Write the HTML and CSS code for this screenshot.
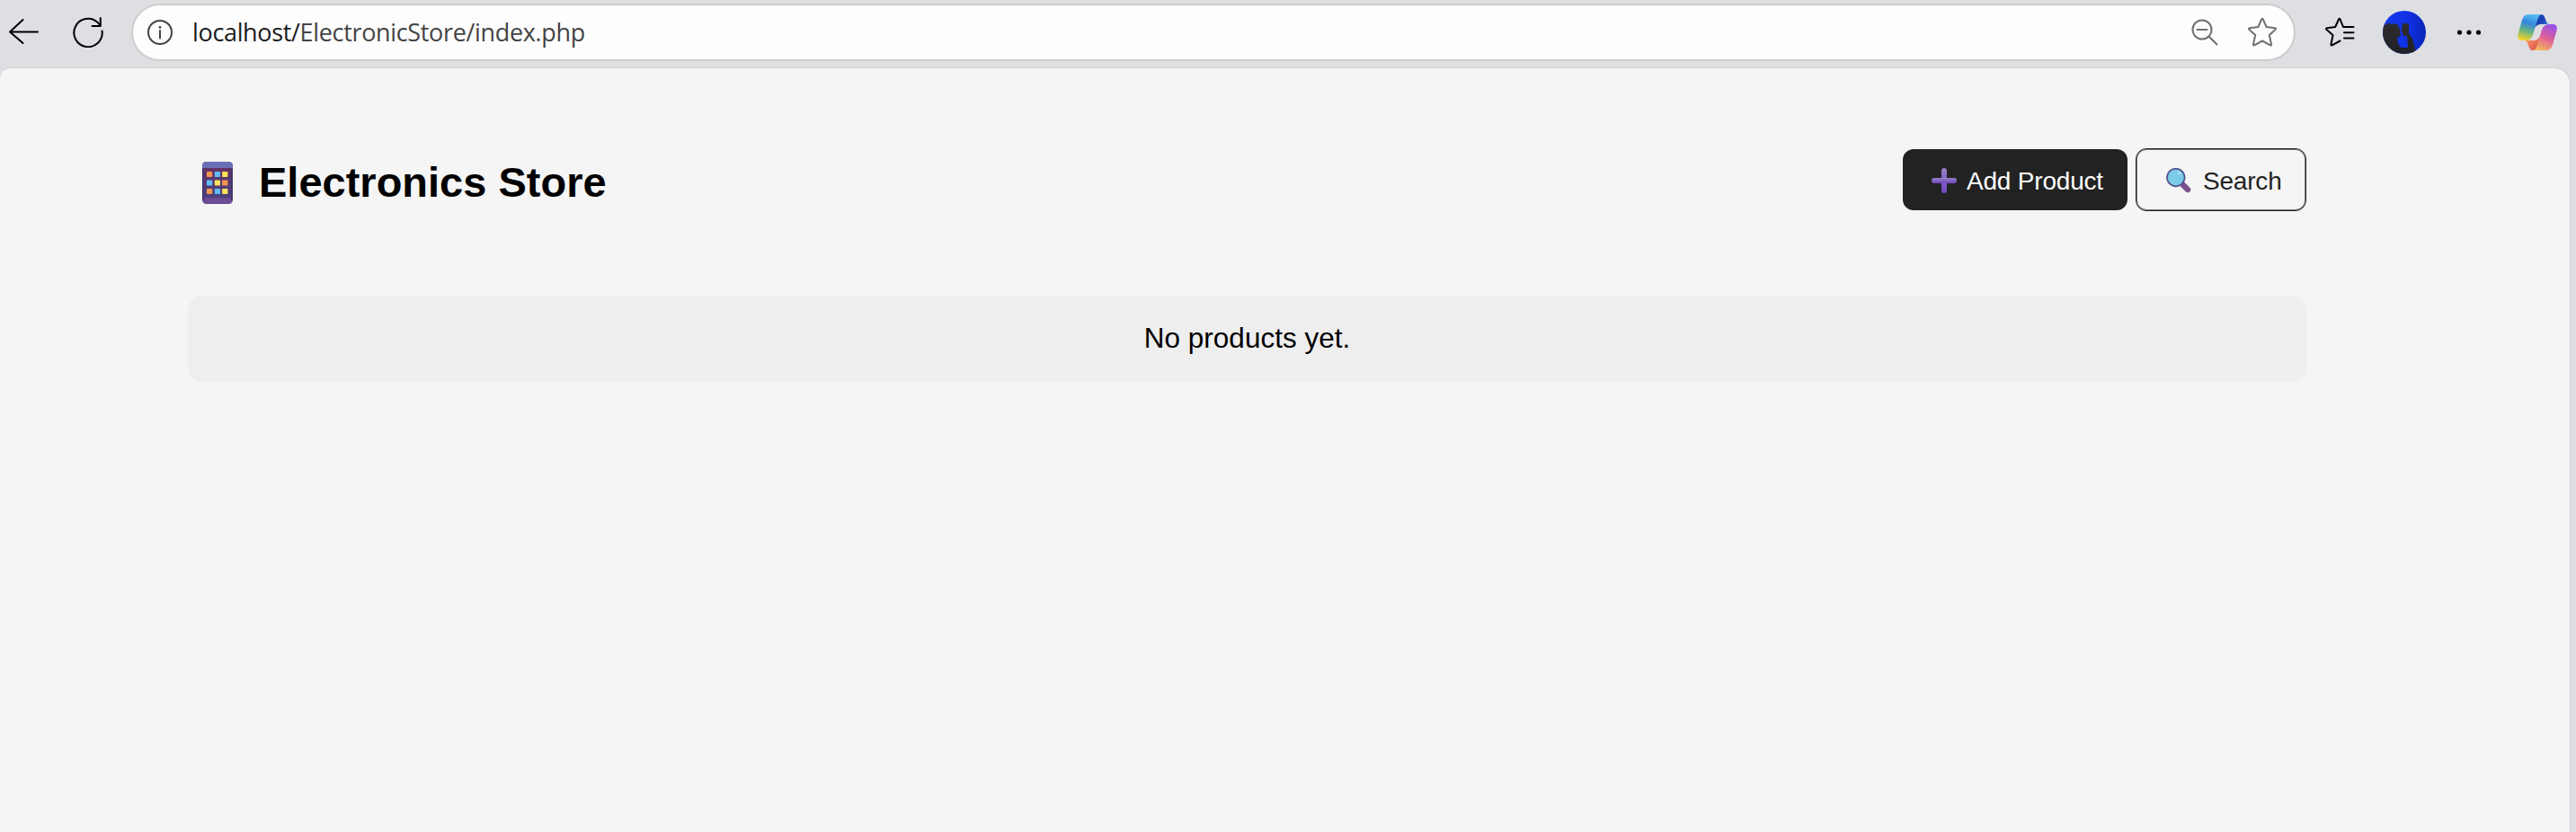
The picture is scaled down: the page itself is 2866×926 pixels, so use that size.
FILE: index.html
```html
<!DOCTYPE html>
<html lang="en">
<head>
<meta charset="utf-8">
<title>Electronics Store</title>
<link rel="stylesheet" href="styles.css">
</head>
<body>
<header class="toolbar">
  <svg class="back" width="34" height="30" viewBox="0 0 34 30"><path d="M16.500 2L2 15.500L16.500 28M2 15.500H33" /></svg>
  <svg class="reload" width="34" height="34" viewBox="0 0 34 34"><path d="M32.600 15.500A15.700 15.700 0 1 1 27.500 5.800L30.800 9.500M30.800 1V10H21.500"/></svg>
  <div class="address">
    <svg class="info" width="30" height="30" viewBox="0 0 30 30"><circle cx="15" cy="15" r="13"/><path d="M15 13V21.500"/><circle class="dot" cx="15" cy="9.400" r="1.400"/></svg>
    <div class="url"><span class="host">localhost/</span>ElectronicStore/index.php</div>
    <svg class="zoom-out" width="30" height="30" viewBox="0 0 30 30"><circle cx="12" cy="12" r="10.500"/><path d="M6.500 12H17.500M19.500 19.500L28.500 28.500"/></svg>
    <svg class="star" width="34" height="34" viewBox="0 0 34 34"><path d="M16.200 2.500Q17 .8 17.800 2.500L21.600 11L31 12.200Q32.800 12.600 31.500 14L24.800 20L27 30.200Q27.200 32 25.500 31.200L17 26.500L8.500 31.200Q6.800 32 7 30.200L9.200 20L2.500 14Q1.200 12.600 3 12.200L12.400 11Z"/></svg>
  </div>
  <svg class="favorites" width="34" height="34" viewBox="0 0 34 34"><path d="M17.500 26.500L9 31.200Q7.200 32 7.500 30.200L9.500 20L2.500 14Q1.200 12.600 3 12.200L12.200 11L16 2.500Q16.800 .8 17.600 2.500L21 11H32.500M22 17.300H32.500M22 23.500H32.500"/></svg>
  <svg class="avatar" width="48" height="48" viewBox="0 0 48 48">
    <defs><clipPath id="face"><circle cx="24" cy="24" r="24"/></clipPath><linearGradient id="blue"><stop offset="0" stop-color="#1537ea"/><stop offset=".6" stop-color="#1031e5"/><stop offset="1" stop-color="#0825b5"/></linearGradient><linearGradient id="shade" x2="0" y2="1"><stop stop-color="#2d2d2f"/><stop offset="1" stop-color="#202128"/></linearGradient></defs>
    <g clip-path="url(#face)"><path fill="url(#blue)" d="M0 0H48V48H0z"/><path fill="url(#shade)" d="M0 16L5 15L7 13L9 15L12 14L14 15L18 16L17 18L20 21L19 24L20 27L19 29L16 29L17 36L20 41L28 41L27 28L23 28L21 23L22 14H29V25L33 31L36 42L37 48H0z"/></g>
  </svg>
  <svg class="more" width="28" height="8" viewBox="0 0 28 8"><circle cx="3.500" cy="4" r="2.600"/><circle cx="14" cy="4" r="2.600"/><circle cx="24.500" cy="4" r="2.600"/></svg>
  <svg class="copilot" width="44" height="40" viewBox="0 0 44 40">
    <defs>
      <linearGradient id="c1" x1=".6" x2=".35" y2="1"><stop stop-color="#55bdf4"/><stop offset=".35" stop-color="#3586dc"/><stop offset=".65" stop-color="#65b582"/><stop offset="1" stop-color="#f4d42b"/></linearGradient>
      <linearGradient id="c2" x1=".7" x2=".3" y2="1"><stop stop-color="#9a50e9"/><stop offset=".5" stop-color="#de6096"/><stop offset="1" stop-color="#f7b75d"/></linearGradient>
      <linearGradient id="c3" x2="1" y2="1"><stop stop-color="#1949a9"/><stop offset=".5" stop-color="#1d3fb5"/><stop offset="1" stop-color="#4cadf0"/></linearGradient>
      <linearGradient id="c4" x2="1" y2="1"><stop stop-color="#ffad62"/><stop offset="1" stop-color="#d9434c"/></linearGradient>
    </defs>
    <path fill="url(#c3)" d="M22 0H26Q29 0 30 3L32 8Q33 11 36 11H25Q22.500 11 20 14z"/>
    <path fill="url(#c4)" d="M23 40H17Q14 40 13 37L11 32Q10 29 7 29H19Q22 28.500 25 25z"/>
    <path fill="url(#c1)" d="M12 0H27Q24 .5 22.500 5L17 23Q15 29 9 29H5Q-1 29 .5 22L5 6Q7 0 12 0z"/>
    <path fill="url(#c2)" d="M32 40H17Q20 39.500 21.500 35L27 17Q29 11 35 11H39Q45 11 43.500 18L39 34Q37 40 32 40z"/>
  </svg>
</header>
<main class="page">
  <div class="container">
    <div class="heading">
      <h1 class="title">
        <svg class="phone" width="34" height="47" viewBox="0 0 34 47">
          <defs><linearGradient id="body" x2="0" y2="1"><stop stop-color="#633263"/><stop offset="1" stop-color="#49417e"/></linearGradient></defs>
          <rect width="34" height="47" rx="4.500" fill="#6c4c93"/><path fill="#6870b5" d="M0 8V4.500Q0 0 4.500 0H29.500Q34 0 34 4.500V8z"/><path fill="url(#body)" d="M0 7H34V40H0z"/><path fill="#46356f" d="M0 7H2V43H0zM32 7H34V43H32z"/>
          <g fill="#f39650"><rect x="5" y="11" width="6.200" height="6" rx=".7"/><rect x="22.200" y="20.500" width="6.200" height="6" rx=".7"/><rect x="5" y="30" width="6.200" height="6" rx=".7"/></g>
          <g fill="#60bdf7"><rect x="13.800" y="11" width="6.200" height="6" rx=".7"/><rect x="5" y="20.500" width="6.200" height="6" rx=".7"/><rect x="13.800" y="30" width="6.200" height="6" rx=".7"/></g>
          <g fill="#ffe35d"><rect x="22.200" y="11" width="6.200" height="6" rx=".7"/><rect x="13.800" y="20.500" width="6.200" height="6" rx=".7"/><rect x="22.200" y="30" width="6.200" height="6" rx=".7"/></g>
        </svg>
        <span>Electronics Store</span>
      </h1>
      <nav class="actions">
        <a class="button add">
          <svg width="28" height="28" viewBox="0 0 28 28"><defs><linearGradient id="plus" x2="0" y2="1"><stop stop-color="#9580c4"/><stop offset="1" stop-color="#7045c5"/></linearGradient></defs><rect x="11" width="6" height="28" rx="3" fill="url(#plus)"/><rect y="11" width="28" height="6" rx="3" fill="url(#plus)"/></svg>
          <span>Add Product</span>
        </a>
        <a class="button search">
          <svg width="28" height="28" viewBox="0 0 28 28"><path d="M19 19L24 24" stroke="#79508b" stroke-width="6.500" stroke-linecap="round"/><circle cx="10.800" cy="10.500" r="9.800" fill="#7acbe7" stroke="#50528f" stroke-width="1.700"/><circle cx="14.500" cy="5.800" r="1.800" fill="#ace1f3"/></svg>
          <span>Search</span>
        </a>
      </nav>
    </div>
    <p class="empty">No products yet.</p>
  </div>
</main>
</body>
</html>
```

FILE: styles.css
```css
* { box-sizing: border-box; }
body { margin: 0; height: 926px; overflow: hidden; background: #dedfe3; font-family: "Liberation Sans", Arial, sans-serif; }
svg { display: block; flex: none; }
.toolbar { height: 75px; display: flex; align-items: flex-start; }
.toolbar svg { fill: none; stroke-width: 2; stroke-linecap: round; stroke-linejoin: round; }
.back { margin: 20px 0 0 9px; stroke: #000; }
.reload { margin: 19px 0 0 38px; stroke: #000; }
.address { width: 2408px; height: 64px; margin: 4px 0 0 31px; padding: 0 18px 0 15px; border: 2px solid #cdcdcd; border-radius: 32px; background: #fdfdfd; display: flex; align-items: center; }
.info { stroke: #444; }
.info .dot { fill: #444; stroke: none; }
.url { flex: 1; margin-left: 21px; font: 27px/36px "Open Sans", "Noto Sans", sans-serif; letter-spacing: -0.34px; color: #444; white-space: nowrap; }
.host { color: #1b1b1b; }
.zoom-out { stroke: #707070; margin-right: 32px; }
.star { stroke: #707070; }
.favorites { stroke: #000; margin: 19px 0 0 32px; }
.toolbar .avatar { stroke: none; margin: 12px 0 0 31px; }
.toolbar .more { fill: #000; margin: 32px 0 0 34px; }
.toolbar .copilot { stroke: none; margin: 16px 0 0 40px; }
.page { width: 2860px; height: 851px; padding: 89px 0 0 209px; background: #f5f5f5; border-top: 1px solid #cfcfd3; border-right: 1px solid #cfcfd3; border-radius: 12px 18px 0 0; }
.container { width: 2357px; }
.heading { height: 70px; display: flex; justify-content: space-between; align-items: center; }
.title { display: flex; align-items: center; gap: 29px; margin: 6px 0 0 16px; font-size: 47px; line-height: 56px; color: #000; white-space: nowrap; }
.actions { display: flex; align-items: center; gap: 9px; }
.button { display: flex; align-items: center; border-radius: 12px; font-size: 28px; line-height: 36px; white-space: nowrap; }
.button span { padding-top: 3px; letter-spacing: -0.2px; }
.button svg { margin-top: 2px; }
.add { width: 250px; height: 68px; padding-left: 32px; gap: 11px; background: #222; color: #fff; }
.search { width: 190px; height: 70px; padding-left: 33px; gap: 13px; border: 1px solid #222; color: #222; box-shadow: inset 0 0 0 1px #777; }
.empty { height: 96px; margin: 94px 0 0; border-radius: 16px; background: #eee; font-size: 31.5px; line-height: 95px; text-align: center; color: #000; }
```
